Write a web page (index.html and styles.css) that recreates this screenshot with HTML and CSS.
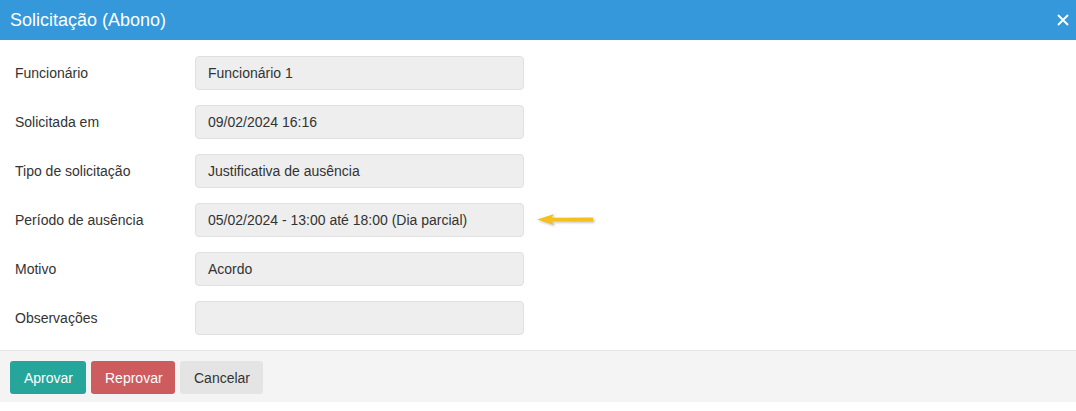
FILE: index.html
```html
<!DOCTYPE html>
<html lang="pt">
<head>
<meta charset="utf-8">
<title>Solicitação (Abono)</title>
<link rel="stylesheet" href="styles.css">
</head>
<body>
<div class="modal">
  <div class="modal-header">
    <span class="modal-title">Solicitação (Abono)</span>
    <span class="close"><svg width="12" height="12" viewBox="0 0 12 12"><path d="M1 1L11 11M11 1L1 11" stroke="#fff" stroke-width="1.8" fill="none"/></svg></span>
  </div>
  <div class="modal-body">
    <div class="row"><div class="label">Funcionário</div><div class="field">Funcionário 1</div></div>
    <div class="row"><div class="label">Solicitada em</div><div class="field">09/02/2024 16:16</div></div>
    <div class="row"><div class="label">Tipo de solicitação</div><div class="field">Justificativa de ausência</div></div>
    <div class="row"><div class="label">Período de ausência</div><div class="field">05/02/2024 - 13:00 até 18:00 (Dia parcial)</div>
      <svg class="arrow" width="64" height="18" viewBox="0 0 64 18">
        <defs><filter id="sh" x="-20%" y="-50%" width="140%" height="200%"><feGaussianBlur stdDeviation="1"/></filter></defs>
        <g transform="translate(1.5 1.5)" fill="#999" opacity="0.55" filter="url(#sh)">
          <path d="M1 7.5L18 2L15.5 5.8L57 5.6L57 9.4L15.5 9.2L18 13Z"/>
        </g>
        <path d="M1 7.5L18 2L15.5 5.8L57 5.6L57 9.4L15.5 9.2L18 13Z" fill="#f4c01c"/>
      </svg>
    </div>
    <div class="row"><div class="label">Motivo</div><div class="field">Acordo</div></div>
    <div class="row"><div class="label">Observações</div><div class="field"></div></div>
  </div>
  <div class="modal-footer">
    <button class="btn btn-approve">Aprovar</button>
    <button class="btn btn-reject">Reprovar</button>
    <button class="btn btn-cancel">Cancelar</button>
  </div>
</div>
</body>
</html>
```
FILE: styles.css
```css
html, body {
  margin: 0;
  padding: 0;
  background: #fff;
  font-family: "Liberation Sans", Arial, sans-serif;
  color: #333;
}
.modal {
  width: 1076px;
}
.modal-header {
  height: 40px;
  background: #3498db;
  display: flex;
  align-items: center;
  justify-content: space-between;
  padding: 0 7px 0 10px;
  box-sizing: border-box;
}
.modal-title {
  color: #fff;
  font-size: 18px;
}
.close {
  display: flex;
  width: 12px;
  height: 12px;
}
.modal-body {
  padding: 16px 0 15px 15px;
  display: flex;
  flex-direction: column;
  gap: 15px;
}
.row {
  display: flex;
  align-items: center;
  height: 34px;
  font-size: 14px;
}
.label {
  width: 180px;
  flex: none;
}
.field {
  width: 329px;
  height: 34px;
  box-sizing: border-box;
  background: #eee;
  border: 1px solid #e0e0e0;
  border-radius: 4px;
  padding: 0 12px;
  display: flex;
  align-items: center;
}
.arrow {
  margin-left: 12px;
  margin-top: 2px;
}
.modal-footer {
  border-top: 1px solid #e5e5e5;
  background: #f4f4f4;
  padding: 10px 10px 8px;
  display: flex;
  gap: 5px;
}
.btn {
  height: 33px;
  border: none;
  border-radius: 3px;
  font-family: "Liberation Sans", Arial, sans-serif;
  font-size: 14px;
  padding: 0 14px;
  cursor: pointer;
}
.btn-approve {
  background: #26a69a;
  color: #fff;
  width: 76px;
}
.btn-reject {
  background: #cd5c5f;
  color: #fff;
  width: 84px;
}
.btn-cancel {
  background: #e4e4e4;
  color: #333;
  width: 83px;
}
```
